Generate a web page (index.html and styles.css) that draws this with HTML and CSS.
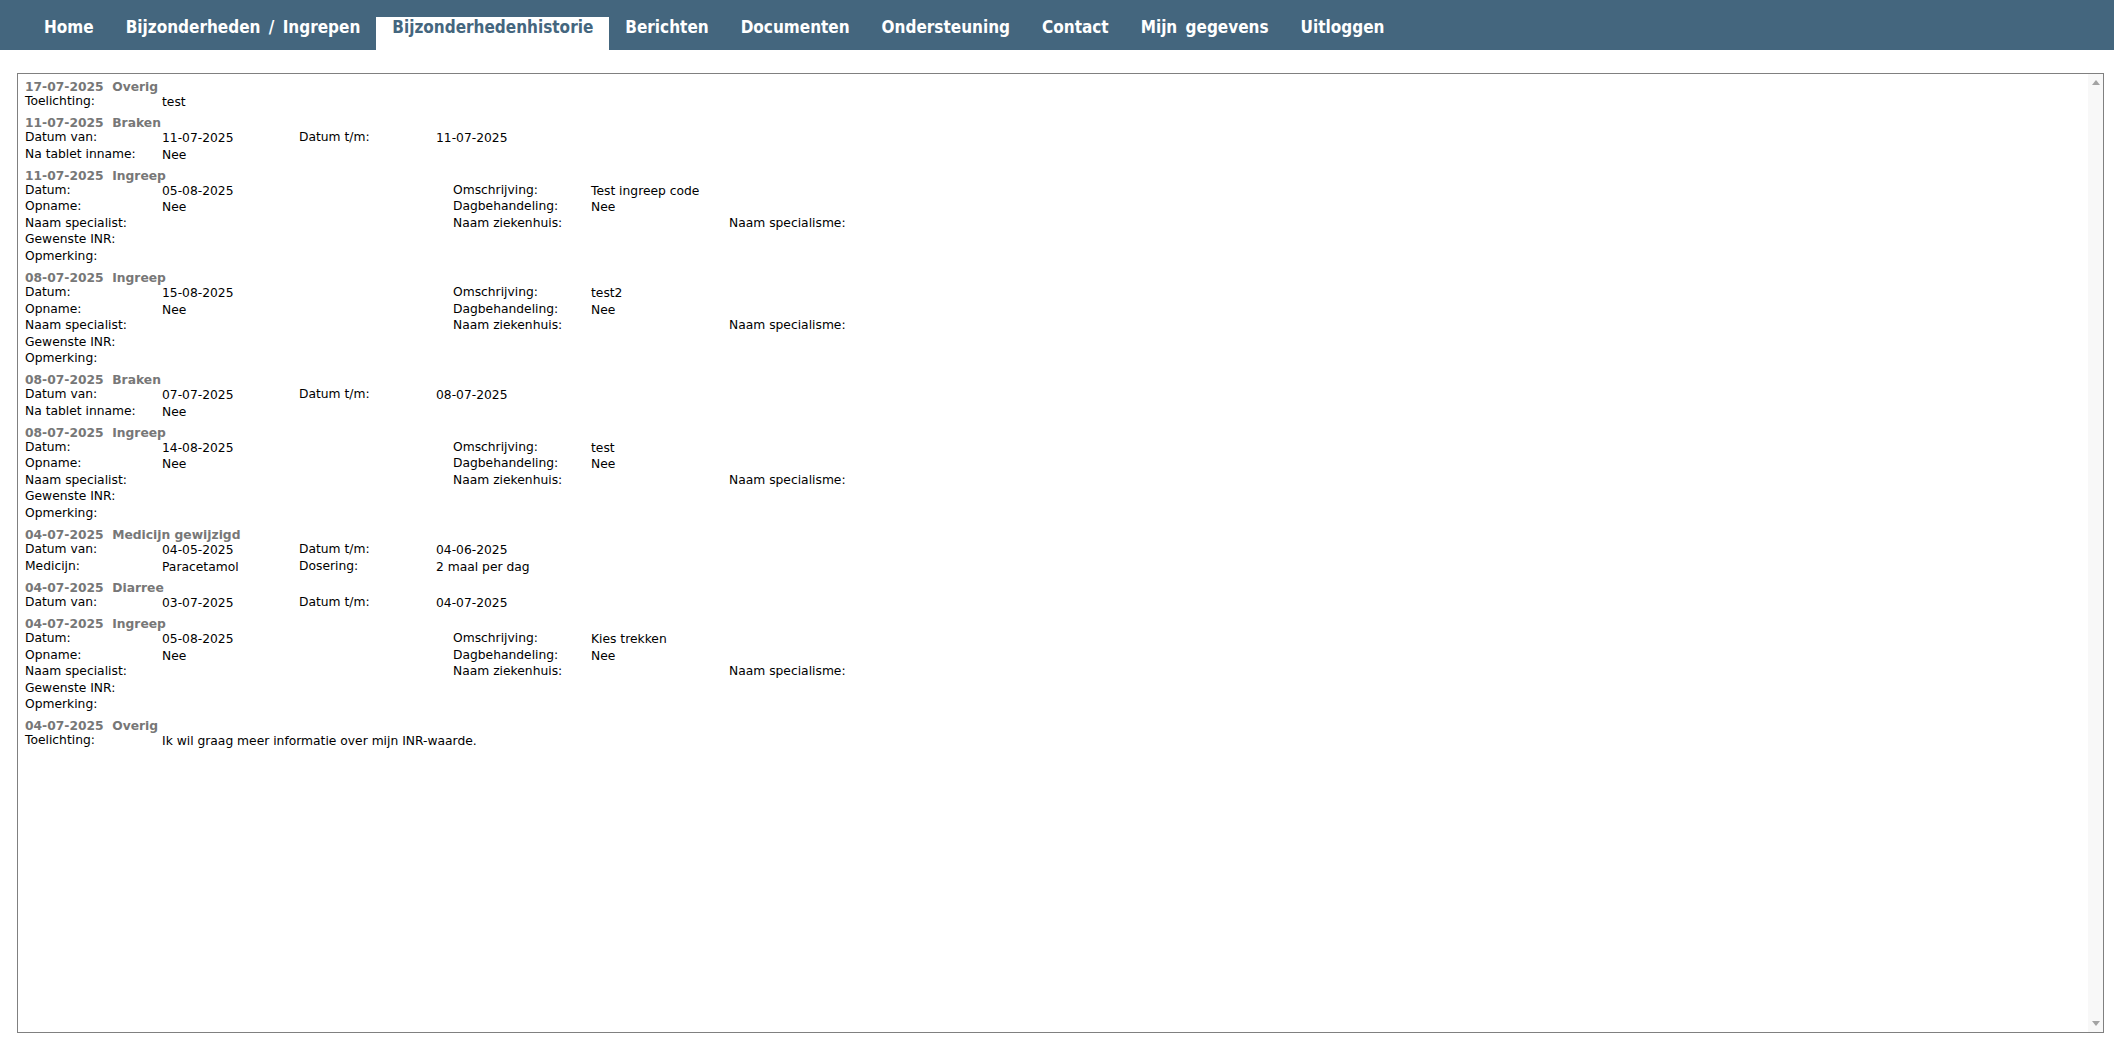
FILE: index.html
```html
<!DOCTYPE html>
<html lang="nl">
<head>
  <meta charset="UTF-8">
  <title>Bijzonderhedenhistorie</title>
  <link rel="stylesheet" href="styles.css">
</head>
<body>
  <ul class="menu">
    <li><a href="#">Home</a></li>
    <li><a href="#">Bijzonderheden / Ingrepen</a></li>
    <li class="active"><a href="#">Bijzonderhedenhistorie</a></li>
    <li><a href="#">Berichten</a></li>
    <li><a href="#">Documenten</a></li>
    <li><a href="#">Ondersteuning</a></li>
    <li><a href="#">Contact</a></li>
    <li><a href="#">Mijn gegevens</a></li>
    <li><a href="#">Uitloggen</a></li>
  </ul>

  <div class="history-frame">
    <div class="history">
      <div class="entry">
        <div class="entry-title">17-07-2025&nbsp; Overig</div>
        <div class="row"><span class="lbl">Toelichting:</span><span class="val">test</span></div>
      </div>

      <div class="entry">
        <div class="entry-title">11-07-2025&nbsp; Braken</div>
        <div class="row"><span class="lbl">Datum van:</span><span class="val">11-07-2025</span><span class="lbl">Datum t/m:</span><span class="val">11-07-2025</span></div>
        <div class="row"><span class="lbl">Na tablet inname:</span><span class="val">Nee</span></div>
      </div>

      <div class="entry ingreep">
        <div class="entry-title">11-07-2025&nbsp; Ingreep</div>
        <div class="row"><span class="lbl">Datum:</span><span class="val">05-08-2025</span><span class="lbl">Omschrijving:</span><span class="val">Test ingreep code</span></div>
        <div class="row"><span class="lbl">Opname:</span><span class="val">Nee</span><span class="lbl">Dagbehandeling:</span><span class="val">Nee</span></div>
        <div class="row"><span class="lbl">Naam specialist:</span><span class="val"></span><span class="lbl">Naam ziekenhuis:</span><span class="val"></span><span class="lbl">Naam specialisme:</span><span class="val"></span></div>
        <div class="row"><span class="lbl">Gewenste INR:</span><span class="val"></span></div>
        <div class="row"><span class="lbl">Opmerking:</span><span class="val"></span></div>
      </div>

      <div class="entry ingreep">
        <div class="entry-title">08-07-2025&nbsp; Ingreep</div>
        <div class="row"><span class="lbl">Datum:</span><span class="val">15-08-2025</span><span class="lbl">Omschrijving:</span><span class="val">test2</span></div>
        <div class="row"><span class="lbl">Opname:</span><span class="val">Nee</span><span class="lbl">Dagbehandeling:</span><span class="val">Nee</span></div>
        <div class="row"><span class="lbl">Naam specialist:</span><span class="val"></span><span class="lbl">Naam ziekenhuis:</span><span class="val"></span><span class="lbl">Naam specialisme:</span><span class="val"></span></div>
        <div class="row"><span class="lbl">Gewenste INR:</span><span class="val"></span></div>
        <div class="row"><span class="lbl">Opmerking:</span><span class="val"></span></div>
      </div>

      <div class="entry">
        <div class="entry-title">08-07-2025&nbsp; Braken</div>
        <div class="row"><span class="lbl">Datum van:</span><span class="val">07-07-2025</span><span class="lbl">Datum t/m:</span><span class="val">08-07-2025</span></div>
        <div class="row"><span class="lbl">Na tablet inname:</span><span class="val">Nee</span></div>
      </div>

      <div class="entry ingreep">
        <div class="entry-title">08-07-2025&nbsp; Ingreep</div>
        <div class="row"><span class="lbl">Datum:</span><span class="val">14-08-2025</span><span class="lbl">Omschrijving:</span><span class="val">test</span></div>
        <div class="row"><span class="lbl">Opname:</span><span class="val">Nee</span><span class="lbl">Dagbehandeling:</span><span class="val">Nee</span></div>
        <div class="row"><span class="lbl">Naam specialist:</span><span class="val"></span><span class="lbl">Naam ziekenhuis:</span><span class="val"></span><span class="lbl">Naam specialisme:</span><span class="val"></span></div>
        <div class="row"><span class="lbl">Gewenste INR:</span><span class="val"></span></div>
        <div class="row"><span class="lbl">Opmerking:</span><span class="val"></span></div>
      </div>

      <div class="entry">
        <div class="entry-title">04-07-2025&nbsp; Medicijn gewijzigd</div>
        <div class="row"><span class="lbl">Datum van:</span><span class="val">04-05-2025</span><span class="lbl">Datum t/m:</span><span class="val">04-06-2025</span></div>
        <div class="row"><span class="lbl">Medicijn:</span><span class="val">Paracetamol</span><span class="lbl">Dosering:</span><span class="val">2 maal per dag</span></div>
      </div>

      <div class="entry">
        <div class="entry-title">04-07-2025&nbsp; Diarree</div>
        <div class="row"><span class="lbl">Datum van:</span><span class="val">03-07-2025</span><span class="lbl">Datum t/m:</span><span class="val">04-07-2025</span></div>
      </div>

      <div class="entry ingreep">
        <div class="entry-title">04-07-2025&nbsp; Ingreep</div>
        <div class="row"><span class="lbl">Datum:</span><span class="val">05-08-2025</span><span class="lbl">Omschrijving:</span><span class="val">Kies trekken</span></div>
        <div class="row"><span class="lbl">Opname:</span><span class="val">Nee</span><span class="lbl">Dagbehandeling:</span><span class="val">Nee</span></div>
        <div class="row"><span class="lbl">Naam specialist:</span><span class="val"></span><span class="lbl">Naam ziekenhuis:</span><span class="val"></span><span class="lbl">Naam specialisme:</span><span class="val"></span></div>
        <div class="row"><span class="lbl">Gewenste INR:</span><span class="val"></span></div>
        <div class="row"><span class="lbl">Opmerking:</span><span class="val"></span></div>
      </div>

      <div class="entry">
        <div class="entry-title">04-07-2025&nbsp; Overig</div>
        <div class="row"><span class="lbl">Toelichting:</span><span class="val">Ik wil graag meer informatie over mijn INR-waarde.</span></div>
      </div>
    </div>

    <!-- lege scrollbalk van het frame -->
    <div class="scrollbar">
      <span class="arrow up"></span>
      <span class="arrow down"></span>
    </div>
  </div>
</body>
</html>
```

FILE: styles.css
```css
body {
  margin: 0;
  padding: 0;
  background-color: white;
  font-family: 'DejaVu Sans', Verdana, sans-serif;
  color: #000;
}

/* Hoofdmenu */
.menu {
  display: flex;
  align-items: flex-end;
  height: 50px;
  margin: 0;
  padding: 0 0 0 28px;
  list-style: none;
  background-color: #44667e;
}
.menu li {
  height: 33px;
  padding: 0 16px;
}
.menu a {
  display: block;
  padding-top: 1px;
  font-family: 'DejaVu Sans Condensed', 'DejaVu Sans', sans-serif;
  font-stretch: condensed;
  font-weight: bold;
  font-size: 17px;
  line-height: 19px;
  word-spacing: 3px;
  color: white;
  text-decoration: none;
  white-space: nowrap;
}
.menu li.active {
  background-color: white;
}
.menu li.active a {
  color: #44667e;
}

/* Frame met historie */
.history-frame {
  display: flex;
  height: 958px;
  margin: 23px 10px 0 17px;
  border: 1px solid #808080;
}
.history {
  flex: 1;
  padding: 6px 0 0 7px;
  font-size: 12.3px;
}
.entry {
  margin-bottom: 5.7px;
}
.entry-title {
  font-weight: bold;
  line-height: 14px;
  color: #777;
  white-space: nowrap;
}
.row {
  display: grid;
  grid-template-columns: 137px 137px 137px 1fr;
  height: 16.5px;
  white-space: nowrap;
}
.ingreep .row {
  grid-template-columns: 137px 291px 138px 138px 137px 1fr;
}
.lbl {
  line-height: 15px;
}
.val {
  line-height: 17px;
}

.scrollbar {
  display: flex;
  flex-direction: column;
  justify-content: space-between;
  align-items: center;
  width: 15px;
  padding: 6px 0 6px;
  background-color: #f8f8f8;
}
.arrow {
  width: 0;
  height: 0;
  border-left: 4px solid transparent;
  border-right: 4px solid transparent;
}
.arrow.up {
  border-bottom: 5px solid #a3a3a3;
}
.arrow.down {
  border-top: 5px solid #a3a3a3;
}
```
